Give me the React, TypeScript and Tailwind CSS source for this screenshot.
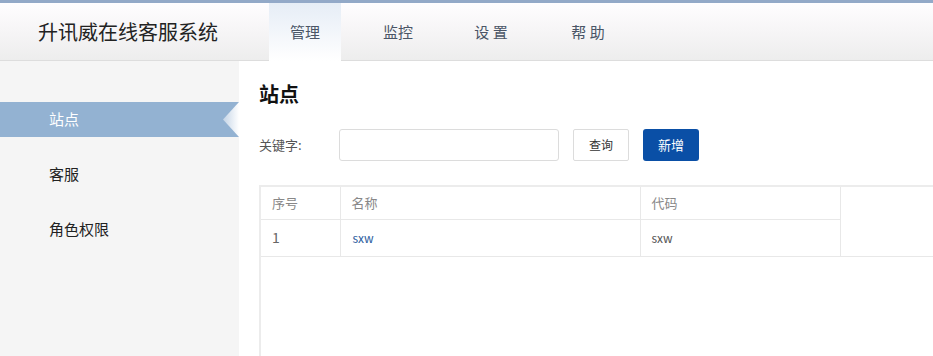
const tabs = [
  { label: "管理", active: true },
  { label: "监控" },
  { label: "设 置" },
  { label: "帮 助", extra: "ml-[4px]" },
];

const menu = [
  { label: "站点", active: true },
  { label: "客服" },
  { label: "角色权限" },
];

const font = "font-['Microsoft_YaHei','Noto_Sans_CJK_SC',sans-serif]";

export default function App() {
  return (
    <div className={`flex h-[356px] w-[933px] flex-col overflow-hidden bg-white ${font}`}>
      {/* top bar */}
      <div className="h-[3px] shrink-0 bg-[#93a9c8]" />
      <header className="flex h-[58px] shrink-0 items-stretch border-b border-[#dddddd] bg-gradient-to-b from-[#fffdff] to-[#ededed]">
        <div className="flex w-[269px] items-center pl-[38px] text-[20px] text-[#222]">
          升讯威在线客服系统
        </div>
        <nav className="flex gap-[21px]">
          {tabs.map((tab) => (
            <div
              key={tab.label}
              className={`relative -mb-px flex w-[72px] items-center justify-center whitespace-pre text-[15px] text-[#4a5566] ${
                tab.active ? "bg-gradient-to-b from-[#e6edf6] to-white" : ""
              } ${tab.extra ?? ""}`}
            >
              {tab.label}
            </div>
          ))}
        </nav>
      </header>

      <div className="flex min-h-0 flex-1">
        <aside className="w-[239px] shrink-0 bg-[#f5f5f5] pt-[41px]">
          <ul className="flex flex-col gap-[20px]">
            {menu.map((item) => (
              <li
                key={item.label}
                className={`relative flex h-[35px] items-center pl-[49px] text-[15px] ${
                  item.active ? "bg-[#93b2d2] text-white" : "text-[#222]"
                }`}
              >
                {item.label}
                {item.active ? (
                  <svg
                    className="absolute right-0 top-0"
                    width="16"
                    height="35"
                    viewBox="0 0 16 35"
                  >
                    <defs>
                      <linearGradient id="arrow" x1="0" y1="0" x2="1" y2="0">
                        <stop offset="0" stopColor="#c4d4e6" />
                        <stop offset="1" stopColor="#ffffff" />
                      </linearGradient>
                    </defs>
                    <polygon points="16,0 0,17.5 16,35" fill="url(#arrow)" />
                  </svg>
                ) : null}
              </li>
            ))}
          </ul>
        </aside>

        <main className="min-w-0 flex-1 pl-[20px] pt-[20px]">
          <h1 className="text-[20px] font-bold leading-[26px] text-[#111]">站点</h1>

          <div className="mt-[22px] flex items-center">
            <span className="w-[80px] text-[13px] text-[#555]">关键字:</span>
            <input className="h-[32px] w-[220px] rounded-[3px] border border-[#dcdcdc] bg-white outline-none" />
            <button className="ml-[14px] h-[32px] w-[56px] rounded-[2px] border border-[#dcdcdc] bg-white text-[12px] text-[#333]">
              查询
            </button>
            <button className="ml-[14px] h-[32px] w-[56px] rounded-[3px] bg-[#0a4fa6] text-[13px] text-white">
              新增
            </button>
          </div>

          <div className="mt-[24px] h-[200px] border-l-2 border-t-2 border-[#ececec]">
            <table className="w-full border-collapse text-left">
              <tbody>
                <tr className="h-[32px]">
                  <th className="w-[79px] border-b border-r border-[#e8e8e8] pl-[11px] text-[13px] font-normal text-[#888]">
                    序号
                  </th>
                  <th className="w-[300px] border-b border-r border-[#e8e8e8] pl-[11px] text-[13px] font-normal text-[#888]">
                    名称
                  </th>
                  <th className="w-[200px] border-b border-r border-[#e8e8e8] pl-[11px] text-[13px] font-normal text-[#888]">
                    代码
                  </th>
                  <td rowSpan={2} className="border-b border-[#e8e8e8]" />
                </tr>
                <tr className="h-[37px]">
                  <td className="border-b border-r border-[#e8e8e8] pl-[11px] text-[14px] text-[#666]">1</td>
                  <td className="border-b border-r border-[#e8e8e8] pl-[12px] text-[12px] text-[#2d5e9e]">sxw</td>
                  <td className="border-b border-r border-[#e8e8e8] pl-[11px] text-[12px] text-[#555]">sxw</td>
                </tr>
              </tbody>
            </table>
          </div>
        </main>
      </div>
    </div>
  );
}
